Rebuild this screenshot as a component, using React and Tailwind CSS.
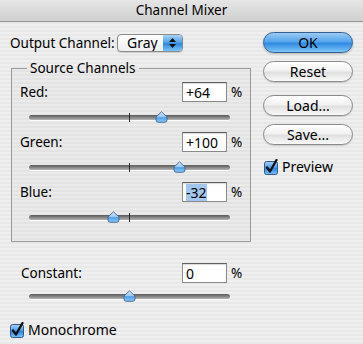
import React from 'react'

const channels = [
  { name: 'Red', value: 64, text: '+64' },
  { name: 'Green', value: 100, text: '+100' },
  { name: 'Blue', value: -32, text: '-32', selected: true },
]

function Thumb({ value }) {
  const left = ((value + 200) / 400) * 201 - 6.5
  return (
    <svg
      className="absolute top-[1px]"
      style={{ left: `${left}px` }}
      width="13"
      height="12"
      viewBox="0 0 13 12"
    >
      <defs>
        <linearGradient id={`tg${value}`} x1="0" y1="0" x2="0" y2="1">
          <stop offset="0" stopColor="#d9e9f8" />
          <stop offset="0.5" stopColor="#9cc6ee" />
          <stop offset="0.55" stopColor="#4f9fe6" />
          <stop offset="1" stopColor="#8ccaf6" />
        </linearGradient>
      </defs>
      <path
        d="M1 6 L6.5 0.8 L12 6 V9 Q12 11.3 9.7 11.3 H3.3 Q1 11.3 1 9 Z"
        fill={`url(#tg${value})`}
        stroke="#3f6793"
        strokeWidth="0.9"
      />
    </svg>
  )
}

function Slider({ value }) {
  return (
    <div className="relative ml-[9px] flex h-[14px] w-[201px] items-center">
      <div className="h-[5px] w-full rounded-full bg-gradient-to-b from-[#5a5a5a] to-[#b4b4b4] shadow-[0_1px_0_rgba(255,255,255,0.9)]" />
      <div className="absolute left-[100px] top-[3px] h-[9px] w-px bg-[#2a2a2a]" />
      <Thumb value={value} />
    </div>
  )
}

function Field({ text, selected }) {
  return (
    <div className="flex h-[20px] w-[45px] items-center border border-[#8a8a8a] border-t-[#5f5f5f] bg-white pl-[3px] text-[14px] shadow-[inset_0_1px_1px_rgba(0,0,0,0.15)]">
      <span className={selected ? 'bg-[#a3c6ee] leading-[17px]' : 'leading-[17px]'}>{text}</span>
    </div>
  )
}

function Checkbox() {
  return (
    <svg width="16" height="16" viewBox="0 0 16 16" className="shrink-0">
      <defs>
        <linearGradient id="cb" x1="0" y1="0" x2="0" y2="1">
          <stop offset="0" stopColor="#a9d3f7" />
          <stop offset="0.45" stopColor="#4f9fe8" />
          <stop offset="0.55" stopColor="#2c86df" />
          <stop offset="1" stopColor="#7dc4f7" />
        </linearGradient>
      </defs>
      <rect x="1.5" y="2.5" width="13" height="13" rx="2" fill="url(#cb)" stroke="#2f5a8c" />
      <path d="M4 8.5 L7 12.5 L13.5 1" fill="none" stroke="#111" strokeWidth="2.3" strokeLinecap="round" strokeLinejoin="round" />
    </svg>
  )
}

function PillButton({ children, primary }) {
  return (
    <button
      type="button"
      className={
        primary
          ? 'flex h-[21px] w-[90px] items-center justify-center rounded-full border border-[#355f93] bg-[linear-gradient(180deg,#9bcaf3_0%,#55a6ec_45%,#2f8ae1_55%,#7fc6f8_100%)] text-[14px] text-black shadow-[0_1px_2px_rgba(0,0,0,0.25)]'
          : 'flex h-[21px] w-[90px] items-center justify-center rounded-full border border-[#8b8b8b] bg-[linear-gradient(180deg,#ffffff_0%,#f2f2f2_45%,#e0e0e0_55%,#f9f9f9_100%)] text-[14px] text-black shadow-[0_1px_1px_rgba(0,0,0,0.15)]'
      }
    >
      {children}
    </button>
  )
}

export default function App() {
  return (
    <div className="h-[344px] w-[363px] overflow-hidden bg-[repeating-linear-gradient(180deg,#efefef_0px,#efefef_2px,#e8e8e8_2px,#e8e8e8_4px)] font-['Noto_Sans',sans-serif] text-[13.5px] text-black">
      <div className="flex h-[22px] items-center justify-center border-b border-[#959595] bg-gradient-to-b from-[#e6e6e6] to-[#d0d0d0] text-[13.5px]">
        Channel Mixer
      </div>

      <div className="flex">
        <div className="w-[249px] pl-[10px]">
          <div className="mt-[12px] flex h-[18px] items-center">
            <span className="w-[107px]">Output Channel:</span>
            <div className="flex h-[18px] w-[66px] overflow-hidden rounded-[4px] border border-[#8c8c8c] bg-gradient-to-b from-white to-[#eeeeee] shadow-[0_1px_1px_rgba(0,0,0,0.15)]">
              <span className="flex-1 pl-[9px] text-[14px] leading-[16px]">Gray</span>
              <div className="flex w-[19px] flex-col items-center justify-center gap-[2px] bg-[linear-gradient(180deg,#a7d3f7_0%,#52a3ea_45%,#2e88df_55%,#7cc4f7_100%)]">
                <svg width="7" height="4" viewBox="0 0 7 4"><path d="M0 4 L3.5 0 L7 4 Z" fill="#111" /></svg>
                <svg width="7" height="4" viewBox="0 0 7 4"><path d="M0 0 L3.5 4 L7 0 Z" fill="#111" /></svg>
              </div>
            </div>
          </div>

          <fieldset className="ml-px mt-[8px] w-[238px] border border-[#9a9a9a] bg-black/[0.02] px-[8px] pb-[15px]">
            <legend className="ml-[7px] px-[3px] text-[13.5px] leading-[16px]">Source Channels</legend>
            {channels.map((c) => (
              <div key={c.name} className="mt-[6px]">
                <div className="flex h-[20px] items-center">
                  <span className="w-[162px]">{c.name}:</span>
                  <Field text={c.text} selected={c.selected} />
                  <span className="ml-[4px]">%</span>
                </div>
                <div className="mt-[8px]">
                  <Slider value={c.value} />
                </div>
                <div className="h-[2px]" />
              </div>
            ))}
          </fieldset>

          <div className="ml-[11px] mt-[21px] flex h-[20px] items-center">
            <span className="w-[161px]">Constant:</span>
            <Field text="0" />
            <span className="ml-[4px]">%</span>
          </div>
          <div className="ml-[10px] mt-[6px]">
            <Slider value={0} />
          </div>

          <div className="mt-[16px] flex items-center">
            <div className="-ml-[1px]">
              <Checkbox />
            </div>
            <span className="ml-[3px] text-[14px]">Monochrome</span>
          </div>
        </div>

        <div className="flex flex-col pl-[14px] pt-[10px]">
          <PillButton primary>OK</PillButton>
          <div className="mt-[8px]">
            <PillButton>Reset</PillButton>
          </div>
          <div className="mt-[13px]">
            <PillButton>Load...</PillButton>
          </div>
          <div className="mt-[8px]">
            <PillButton>Save...</PillButton>
          </div>
          <div className="mt-[11px] flex items-center">
            <Checkbox />
            <span className="ml-[3px] text-[14px]">Preview</span>
          </div>
        </div>
      </div>
    </div>
  )
}
